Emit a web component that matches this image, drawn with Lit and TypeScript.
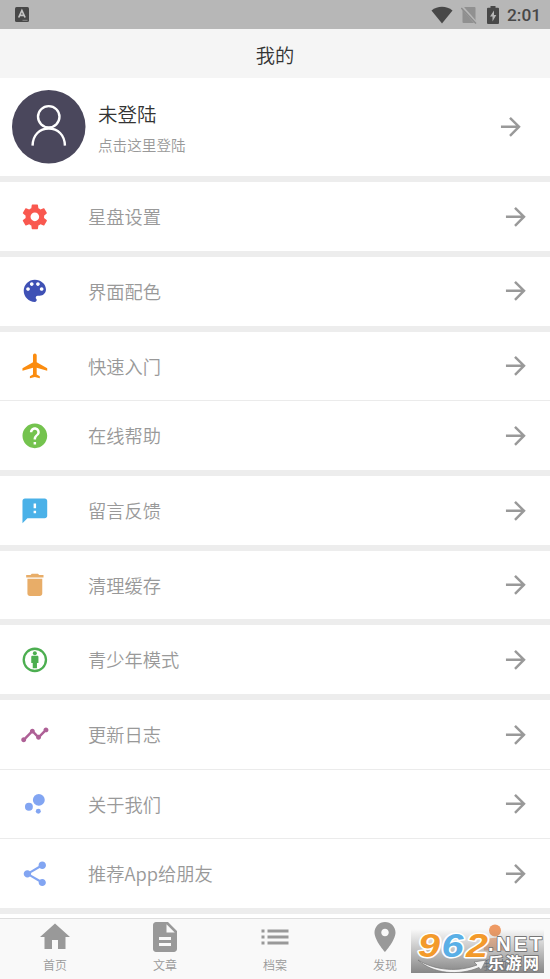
import { LitElement, html, css, svg } from "lit";
import { customElement, property } from "lit/decorators.js";

const ICONS: Record<string, unknown> = {
  arrow: svg`<path d="M12 4l-1.41 1.41L16.17 11H4v2h12.17l-5.58 5.59L12 20l8-8z"/>`,
  settings: svg`<path d="M19.43 12.98c.04-.32.07-.64.07-.98s-.03-.66-.07-.98l2.11-1.65c.19-.15.24-.42.12-.64l-2-3.46c-.12-.22-.39-.3-.61-.22l-2.49 1c-.52-.4-1.08-.73-1.69-.98l-.38-2.65C14.46 2.18 14.25 2 14 2h-4c-.25 0-.46.18-.49.42l-.38 2.65c-.61.25-1.17.59-1.69.98l-2.49-1c-.23-.09-.49 0-.61.22l-2 3.46c-.13.22-.07.49.12.64l2.11 1.65c-.04.32-.07.65-.07.98s.03.66.07.98l-2.11 1.65c-.19.15-.24.42-.12.64l2 3.46c.12.22.39.3.61.22l2.49-1c.52.4 1.08.73 1.69.98l.38 2.65c.03.24.24.42.49.42h4c.25 0 .46-.18.49-.42l.38-2.65c.61-.25 1.17-.59 1.69-.98l2.49 1c.23.09.49 0 .61-.22l2-3.46c.12-.22.07-.49-.12-.64l-2.11-1.65zM12 15.5c-1.93 0-3.5-1.57-3.5-3.5s1.57-3.5 3.5-3.5 3.5 1.57 3.5 3.5-1.57 3.5-3.5 3.5z"/>`,
  palette: svg`<path d="M12 3c-4.97 0-9 4.03-9 9s4.03 9 9 9c.83 0 1.5-.67 1.5-1.5 0-.39-.15-.74-.39-1.01-.23-.26-.38-.61-.38-.99 0-.83.67-1.5 1.5-1.5H16c2.76 0 5-2.24 5-5 0-4.42-4.03-8-9-8zm-5.500 9c-.83 0-1.500-.67-1.500-1.500S5.670 9 6.500 9 8 9.670 8 10.500 7.330 12 6.500 12zm3-4C8.670 8 8 7.330 8 6.500S8.670 5 9.500 5s1.500.67 1.500 1.500S10.330 8 9.500 8zm5 0c-.83 0-1.500-.67-1.500-1.500S13.670 5 14.500 5s1.500.67 1.500 1.500S15.330 8 14.500 8zm3 4c-.83 0-1.500-.67-1.500-1.500S16.670 9 17.500 9s1.500.67 1.500 1.500-.67 1.500-1.500 1.500z"/>`,
  plane: svg`<path d="M22 16v-2l-8.500-5V3.500c0-.83-.67-1.500-1.500-1.500s-1.500.67-1.500 1.500V9L2 14v2l8.500-2.500V19L8 20.500V22l4-1 4 1v-1.500L13.500 19v-5.500L22 16z"/>`,
  help: svg`<path d="M12 2C6.480 2 2 6.480 2 12s4.480 10 10 10 10-4.480 10-10S17.520 2 12 2zm1 17h-2v-2h2v2zm2.070-7.750l-.9.920C13.450 12.900 13 13.500 13 15h-2v-.5c0-1.100.45-2.100 1.170-2.830l1.240-1.260c.37-.36.59-.86.59-1.410 0-1.100-.9-2-2-2s-2 .9-2 2H8c0-2.210 1.790-4 4-4s4 1.790 4 4c0 .88-.36 1.680-.93 2.250z"/>`,
  feedback: svg`<path d="M20 2H4c-1.100 0-1.990.9-1.990 2L2 22l4-4h14c1.100 0 2-.9 2-2V4c0-1.100-.9-2-2-2zm-7 12h-2v-2h2v2zm0-4h-2V6h2v4z"/>`,
  trash: svg`<path d="M6 19c0 1.100.9 2 2 2h8c1.100 0 2-.9 2-2V7H6v12zM19 4h-3.500l-1-1h-5l-1 1H5v2h14V4z"/>`,
  person: svg`<circle cx="12" cy="12" r="9" fill="none" stroke="currentColor" stroke-width="1.900"/><circle cx="12" cy="6.600" r="1.600"/><path d="M10 8.600h4c.5 0 .9.400.9.900v5h-1.200V18.800h-3.400v-4.300H9.100V9.500c0-.5.400-.9.900-.9z"/>`,
  timeline: svg`<path d="M23 8c0 1.100-.9 2-2 2-.18 0-.35-.02-.51-.07l-3.560 3.550c.05.16.07.34.07.52 0 1.100-.9 2-2 2s-2-.9-2-2c0-.18.02-.36.07-.52l-2.550-2.550c-.16.05-.34.07-.52.07s-.36-.02-.52-.07l-4.550 4.560c.05.16.07.33.07.51 0 1.100-.9 2-2 2s-2-.9-2-2 .9-2 2-2c.18 0 .35.02.51.07l4.560-4.550C8.020 9.360 8 9.180 8 9c0-1.100.9-2 2-2s2 .9 2 2c0 .18-.02.36-.07.52l2.550 2.550c.16-.05.34-.07.52-.07s.36.02.52.07l3.550-3.560C19.020 8.350 19 8.180 19 8c0-1.100.9-2 2-2s2 .9 2 2z"/>`,
  bubbles: svg`<circle cx="7.200" cy="14.400" r="3.200"/><circle cx="14.800" cy="18" r="2"/><circle cx="15.200" cy="8.800" r="4.800"/>`,
  share: svg`<path d="M18 16.080c-.76 0-1.440.3-1.960.77L8.910 12.700c.05-.23.09-.46.09-.7s-.04-.47-.09-.7l7.050-4.110c.54.5 1.250.81 2.040.81 1.660 0 3-1.340 3-3s-1.340-3-3-3-3 1.340-3 3c0 .24.04.47.09.7L8.040 9.810C7.500 9.310 6.790 9 6 9c-1.660 0-3 1.340-3 3s1.340 3 3 3c.79 0 1.500-.31 2.040-.81l7.120 4.160c-.05.21-.08.43-.08.65 0 1.610 1.310 2.920 2.920 2.920s2.920-1.310 2.920-2.920-1.310-2.920-2.920-2.920z"/>`,
  home: svg`<path d="M10 20v-6h4v6h5v-8h3L12 3 2 12h3v8z"/>`,
  file: svg`<path d="M14 2H6c-1.100 0-1.990.9-1.990 2L4 20c0 1.100.89 2 1.990 2H18c1.100 0 2-.9 2-2V8l-6-6zm2 16H8v-2h8v2zm0-4H8v-2h8v2zm-3-5V3.500L18.500 9H13z"/>`,
  list: svg`<path d="M3 13h2v-2H3v2zm0 4h2v-2H3v2zm0-8h2V7H3v2zm4 4h14v-2H7v2zm0 4h14v-2H7v2zM7 7v2h14V7H7z"/>`,
  place: svg`<path d="M12 2C8.130 2 5 5.130 5 9c0 5.250 7 13 7 13s7-7.750 7-13c0-3.870-3.130-7-7-7zm0 9.500c-1.380 0-2.500-1.120-2.500-2.500s1.120-2.500 2.500-2.500 2.500 1.120 2.500 2.500-1.120 2.500-2.500 2.500z"/>`,
  me: svg`<circle cx="12" cy="7.600" r="4"/><path d="M4.500 21v-3c0-3.500 3-5.500 7.500-5.500s7.500 2 7.500 5.500v3z" opacity=".7"/>`,
};

@customElement("ui-icon")
class UiIcon extends LitElement {
  @property() name = "arrow";
  static styles = css`
    :host { display: block; flex: none; }
    svg { display: block; width: 100%; height: 100%; fill: currentColor; }
  `;
  render() {
    return html`<svg viewBox="0 0 24 24">${ICONS[this.name]}</svg>`;
  }
}

const GROUPS = [
  [["settings", "#f9584f", "星盘设置"]],
  [["palette", "#3f51b5", "界面配色"]],
  [["plane", "#fb8c0f", "快速入门"], ["help", "#74c34e", "在线帮助"]],
  [["feedback", "#4ab1e8", "留言反馈"]],
  [["trash", "#e8ad68", "清理缓存"]],
  [["person", "#4cae50", "青少年模式"]],
  [["timeline", "#ae6096", "更新日志"], ["bubbles", "#82a5f2", "关于我们"], ["share", "#82a5f2", "推荐App给朋友"]],
];

const TABS = [["home", "首页"], ["file", "文章"], ["list", "档案"], ["place", "发现"], ["me", "我的"]];

@customElement("app-root")
class AppRoot extends LitElement {
  static styles = css`
    * { box-sizing: border-box; }
    :host {
      display: flex; flex-direction: column; position: relative;
      width: 550px; height: 979px; overflow: hidden; background: #fff;
      font-family: "Noto Sans CJK SC", sans-serif; font-weight: 350; color: #333;
    }
    .status {
      flex: none; height: 29px; padding: 0 10px 0 15px; background: #b7b7b7; color: #484848;
      display: flex; align-items: center; justify-content: space-between;
    }
    .status svg { display: block; }
    .signals { display: flex; align-items: center; }
    .wifi { margin-right: 8px; }
    .sim { margin-right: 10px; }
    .battery { margin-right: 8px; }
    .clock { font: 500 17.3px/29px Roboto, sans-serif; width: 33px; padding-top: 2px; }
    .title {
      flex: none; height: 49px; background: #f5f5f5; text-align: center;
      font-size: 19.300px; line-height: 52px;
    }
    .profile { flex: none; height: 98.300px; padding: 0 24px 0 12px; display: flex; align-items: center; }
    .avatar { width: 73.500px; height: 73.500px; flex: none; }
    .who { flex: 1; padding: 0 0 0 12.500px; }
    .name { font-size: 19.500px; line-height: 30px; }
    .hint { font-size: 14.600px; line-height: 22px; margin-top: 5px; color: #999; }
    .arrow { width: 29.700px; height: 29.700px; color: #999; }
    .group { flex: none; border-top: 6px solid #ededed; }
    .row { height: 68.700px; display: flex; align-items: center; padding: 0 19.600px 0 19.500px; color: #999; }
    .row + .row { height: 69.700px; border-top: 1px solid #ebebeb; }
    .glyph { width: 29.700px; height: 29.700px; }
    .label { flex: 1; padding: 0 0 1px 38.800px; font-size: 18.250px; line-height: 28px; }
    .gap { flex: none; height: 9.700px; border-top: 6px solid #ededed; }
    .tabs {
      flex: 1; display: flex; background: #f9f9f9; border-top: 1px solid #dedede; color: #999;
    }
    .tab { flex: 1; display: flex; flex-direction: column; align-items: center; }
    .tab ui-icon { width: 36px; height: 36px; }
    .tab span { font-size: 12px; line-height: 18px; margin-top: 1px; }
    .tab:last-child { color: #ee9a64; }
    .tab:last-child span { color: #2f5f88; }
    .mark { position: absolute; left: 411px; top: 919px; display: block; overflow: visible; }
    .digits { font: italic 700 33px "Liberation Sans", sans-serif; }
    .net { font: 700 20px "Liberation Sans", sans-serif; }
    .cn { font: 700 16px "Noto Sans CJK SC", sans-serif; }
  `;

  render() {
    return html`
      <div class="status">
        <svg width="14" height="15" viewBox="0 0 14 15">
          <rect width="14" height="15" rx="1.500" fill="#484848" />
          <path d="M3.700 10.500L6.900 3.500L10.100 10.500M5 8.300H8.800" fill="none" stroke="#c4c4c4" stroke-width="1.700" />
          <path d="M7.500 13.300H12.500" stroke="#999" stroke-width=".8" />
        </svg>
        <div class="signals">
          <svg class="wifi" width="22" height="18" viewBox="0 0 22 18"><path d="M.5 4.500C6.500-.5 15.500-.5 21.500 4.500L11 17.500z" fill="#484848" /></svg>
          <svg class="sim" width="16" height="18" viewBox="0 0 16 18">
            <path d="M3.500 1h10q1 0 1 1v14q0 1-1 1h-11q-1 0-1-1V3z" fill="#909090" />
            <path d="M1 1L15.500 17.500" stroke="#b7b7b7" stroke-width="3" />
            <path d="M.3 2L15 17.500" stroke="#8c8c8c" stroke-width="1.500" />
          </svg>
          <svg class="battery" width="12" height="18" viewBox="0 0 12 18">
            <path d="M3.500 0h5v1.800H11q1 0 1 1V17q0 1-1 1H1q-1 0-1-1V2.800q0-1 1-1h2.500z" fill="#484848" />
            <path d="M7 4.500L3 10.500h2.500V15.500L9.300 9H7z" fill="#b7b7b7" />
          </svg>
          <div class="clock">2:01</div>
        </div>
      </div>
      <div class="title">我的</div>
      <div class="profile">
        <svg class="avatar" viewBox="0 0 74 74">
          <circle cx="37" cy="37" r="37" fill="#4a475c" />
          <g fill="none" stroke="#fff" stroke-width="2.400">
            <circle cx="37" cy="27" r="10.800" />
            <path d="M20.700 56C21 45 28 38.800 37 38.800S53 45 53.300 56" />
          </g>
        </svg>
        <div class="who">
          <div class="name">未登陆</div>
          <div class="hint">点击这里登陆</div>
        </div>
        <ui-icon class="arrow" name="arrow"></ui-icon>
      </div>
      ${GROUPS.map((rows) => html`<div class="group">
        ${rows.map(([icon, color, label]) => html`<div class="row">
          <ui-icon class="glyph" name=${icon} style="color:${color}"></ui-icon>
          <div class="label">${label}</div>
          <ui-icon class="arrow" name="arrow"></ui-icon>
        </div>`)}
      </div>`)}
      <div class="gap"></div>
      <div class="tabs">
        ${TABS.map(([icon, label]) => html`<div class="tab"><ui-icon name=${icon}></ui-icon><span>${label}</span></div>`)}
      </div>
      <svg class="mark" width="133" height="54" viewBox="0 -10 133 54">
        <defs>
          <linearGradient id="shade" x1="0" y1="0" x2="0" y2="1">
            <stop offset="0" stop-color="#777" stop-opacity="0" />
            <stop offset="1" stop-color="#777" stop-opacity=".88" />
          </linearGradient>
        </defs>
        <rect width="133" height="44" fill="url(#shade)" />
        <path d="M7 31C25 42 48 43 66 36L63 33L75 31L70 41L68 38.500C48 47 22 45 7 31z" fill="#f4f4f4" stroke="#777" stroke-width=".7" />
        <g class="digits" stroke-linejoin="round">
          <g fill="#fff" stroke="#fff" stroke-width="3">
            <text x="7" y="27.500" textLength="22" lengthAdjust="spacingAndGlyphs">9</text>
            <text x="30.500" y="27.500" textLength="22" lengthAdjust="spacingAndGlyphs">6</text>
            <text x="55" y="27.500" textLength="22" lengthAdjust="spacingAndGlyphs">2</text>
          </g>
          <g>
            <text x="7" y="27.500" textLength="22" lengthAdjust="spacingAndGlyphs" fill="#f39a2b">9</text>
            <text x="30.500" y="27.500" textLength="22" lengthAdjust="spacingAndGlyphs" fill="#5aafe6">6</text>
            <text x="55" y="27.500" textLength="22" lengthAdjust="spacingAndGlyphs" fill="#f39a2b">2</text>
          </g>
        </g>
        <g fill="#fff" stroke="#777" stroke-width="1.800" paint-order="stroke" stroke-linejoin="round">
          <text class="net" x="77" y="22" textLength="54" lengthAdjust="spacing">.NET</text>
          <text class="cn" x="77" y="39.500" textLength="51" lengthAdjust="spacing">乐游网</text>
        </g>
      </svg>
    `;
  }
}
